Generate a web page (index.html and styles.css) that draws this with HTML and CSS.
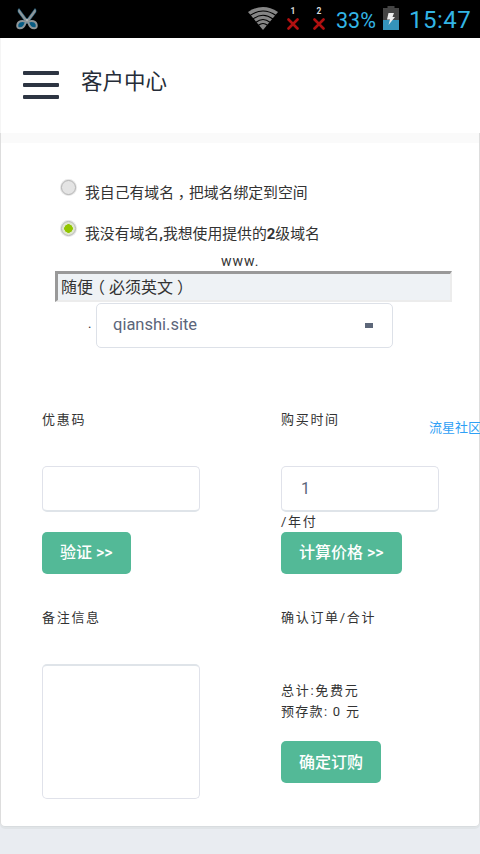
FILE: index.html
```html
<!DOCTYPE html>
<html lang="zh-CN">
<head>
  <meta charset="UTF-8">
  <meta name="viewport" content="width=device-width, initial-scale=1.0">
  <title>客户中心</title>
  <link rel="stylesheet" href="styles.css">
</head>
<body>

<div class="statusbar">
  <svg class="scissors" width="24" height="24" viewBox="0 0 24 24">
    <g fill="#8f9699" stroke="#176d96" stroke-width=".5">
      <path d="M4 1.5 L14 15 L11.5 16.5 L3 5 Q2.4 2.5 4 1.5Z"/>
      <path d="M20 1.5 L10 15 L12.5 16.5 L21 5 Q21.6 2.5 20 1.5Z"/>
    </g>
    <g fill="#075b83" stroke="#8f9699" stroke-width="2">
      <path d="M10.5 14.5 Q4 13 2.5 17 Q1.5 21 4.5 21.3 Q9 21.5 10.5 16Z"/>
      <path d="M13.5 14.5 Q20 13 21.5 17 Q22.5 21 19.5 21.3 Q15 21.5 13.5 16Z"/>
    </g>
    <circle cx="12" cy="13" r="1.2" fill="#aeb4b6"/>
  </svg>
  <span class="spacer"></span>
  <svg class="wifi" width="32" height="24" viewBox="0 0 32 24">
    <path d="M1 5 Q16 -5 31 5 L16 23Z" fill="#868686"/>
    <g fill="none" stroke="#000" stroke-width="1.1">
      <path d="M3 8.5 Q16 -.5 29 8.5"/>
      <path d="M6 12 Q16 4.5 26 12"/>
      <path d="M9 15.3 Q16 9.8 23 15.3"/>
      <path d="M11.5 18.3 Q16 14.8 20.5 18.3"/>
    </g>
  </svg>
  <div class="sim">
    <span>1</span>
    <svg width="12" height="12" viewBox="0 0 12 12"><path d="M1.5 1.5L10.5 10.5M10.5 1.5L1.5 10.5" stroke="#b01010" stroke-width="2.6" stroke-linecap="round"/></svg>
  </div>
  <div class="sim">
    <span>2</span>
    <svg width="12" height="12" viewBox="0 0 12 12"><path d="M1.5 1.5L10.5 10.5M10.5 1.5L1.5 10.5" stroke="#b01010" stroke-width="2.6" stroke-linecap="round"/></svg>
  </div>
  <span class="percent">33%</span>
  <svg class="battery" width="16" height="24" viewBox="0 0 16 24">
    <path d="M0 2H4.5V0H11.5V2H16V24H0Z" fill="#444"/>
    <path d="M0 14H16V24H0Z" fill="#3594bb"/>
    <path d="M5.5 7H11L9.5 11H12L5.5 19L7 13.5H4Z" fill="#eee"/>
  </svg>
  <span class="clock">15:47</span>
</div>

<div class="header">
  <div class="menu"><i></i><i></i><i></i></div>
  <h1>客户中心</h1>
</div>

<div class="panel">
  <div class="domain">
    <label class="choice"><span class="radio"></span><span>我自己有域名<span class="punct">，</span>把域名绑定到空间</span></label>
    <label class="choice"><span class="radio checked"></span><span>我没有域名<b>,</b>我想使用提供的<b>2</b>级域名</span></label>
    <div class="www">www.</div>
    <div class="prefix">随便<span class="punct">（</span>必须英文<span class="punct">）</span></div>
    <div class="suffix">
      <span class="dot">.</span>
      <div class="select">qianshi.site<i></i></div>
    </div>
  </div>

  <div class="watermark">流星社区</div>

  <div class="order">
    <div class="cell">
      <div class="label">优惠码</div>
      <div class="field"></div>
      <div class="unit"></div>
      <button class="btn">验证 &gt;&gt;</button>
    </div>
    <div class="cell">
      <div class="label">购买时间</div>
      <div class="field">1</div>
      <div class="unit">/年付</div>
      <button class="btn">计算价格 &gt;&gt;</button>
    </div>
    <div class="cell">
      <div class="label">备注信息</div>
      <div class="field memo"></div>
    </div>
    <div class="cell">
      <div class="label">确认订单/合计</div>
      <div class="total">总计:免费元<br><span class="deposit">预存款: 0 元</span></div>
      <button class="btn">确定订购</button>
    </div>
  </div>
</div>

</body>
</html>
```
FILE: styles.css
```css
* {
  box-sizing: border-box;
}

body {
  margin: 0;
  height: 854px;
  overflow: hidden;
  background: #e9ecf1;
  color: #333;
  font-family: Roboto, "Noto Sans CJK SC", sans-serif;
}

svg {
  display: block;
}

/* status bar */
.statusbar {
  display: flex;
  height: 38px;
  padding: 0 9px 0 15px;
  background: #000;
  color: #33b5e5;
}

.scissors {
  margin-top: 7px;
}

.spacer {
  flex: 1;
}

.wifi {
  margin: 7px 8px 0 0;
}

.sim {
  width: 12px;
  margin: 7px 14px 0 0;
}

.sim span {
  display: block;
  height: 11px;
  color: #ddd;
  font-size: 8.5px;
  font-weight: bold;
  line-height: 9px;
  text-align: center;
}

.percent {
  width: 40px;
  margin-left: -3px;
  font-size: 21.5px;
  line-height: 41px;
  white-space: nowrap;
}

.battery {
  margin: 6px 10px 0 7px;
}

.clock {
  width: 62px;
  font-size: 24px;
  line-height: 40px;
  letter-spacing: 0.5px;
  white-space: nowrap;
}

/* header */
.header {
  display: flex;
  height: 95px;
  padding-left: 23px;
  background: #fff;
  border-left: 1px solid #f5f5f5;
}

.menu {
  width: 36px;
  margin: 33px 22px 0 -1px;
}

.menu i {
  display: block;
  height: 4px;
  margin-bottom: 8px;
  border-radius: 1px;
  background: #2d3542;
}

h1 {
  margin: 0;
  color: #252c38;
  font-size: 21.5px;
  font-weight: normal;
  line-height: 88px;
}

/* panel */
.panel {
  position: relative;
  height: 694px;
  border: 1px solid #ddd;
  border-top: 0;
  border-bottom-color: #d8dcdf;
  border-radius: 0 0 5px 5px;
  background: linear-gradient(#fafafa 10px, #fff 10px);
  box-shadow: 0 2px 0 #e0e4e7;
}

.domain {
  height: 268px;
  padding: 39px 27px 0 54px;
}

.choice {
  display: flex;
  height: 41px;
  font-size: 14.85px;
  line-height: 42px;
}

.radio {
  width: 15px;
  height: 15px;
  margin: 8px 9px 0 6px;
  border: 1px solid #b5b5b5;
  border-radius: 50%;
  background: #e4e4e4;
  box-shadow: 0 0 0 1px #e6e6e6;
}

.checked {
  background: radial-gradient(circle, #92c500 0, #92c500 4px, #e0e7d0 4.5px);
}

/* half-width punctuation centred in a full cell */
.punct {
  display: inline-block;
  width: 1em;
  text-align: center;
  font-feature-settings: "halt";
}

.www {
  height: 17px;
  font-size: 14px;
  line-height: 15px;
  letter-spacing: 1px;
  padding-left: 166px;
}

.prefix {
  width: 397px;
  height: 31px;
  padding-left: 3px;
  border: solid #ececec;
  border-width: 3px 2px 2px 3px;
  border-top-color: #999;
  border-left-color: #999;
  background: #eef2f5;
  font-size: 16px;
  line-height: 27px;
}

.suffix {
  display: flex;
  margin-top: 1px;
}

.dot {
  width: 8px;
  margin-left: 33px;
  font-size: 13px;
  line-height: 41px;
}

.select {
  display: flex;
  align-items: center;
  justify-content: space-between;
  width: 297px;
  height: 45px;
  padding: 0 19px 3px 16px;
  border: 1px solid #dde1e8;
  border-radius: 5px;
  color: #5b657a;
  font-size: 16.5px;
}

.select i {
  width: 8px;
  height: 5px;
  margin-top: 3px;
  background: #5d6779;
}

.watermark {
  position: absolute;
  top: 286px;
  right: -2px;
  color: #2fa0f5;
  font-size: 13px;
  line-height: 18px;
}

/* order form */
.order {
  display: grid;
  grid-template-columns: 239px 158px;
  grid-template-rows: 198px 200px;
  padding-left: 41px;
}

.cell {
  font-size: 13px;
  letter-spacing: 1.7px;
}

.label {
  height: 65px;
  line-height: 38px;
}

.field {
  width: 158px;
  height: 46px;
  padding-left: 19px;
  border: 1px solid #e0e2ea;
  border-bottom: 2px solid #dfe4e9;
  border-radius: 5px;
  color: #5b657a;
  font-size: 16px;
  line-height: 43px;
}

.memo {
  height: 135px;
  border-top: 2px solid #dfe4e9;
  border-bottom: 1px solid #e0e2ea;
}

.unit {
  height: 20px;
  line-height: 19px;
}

.btn {
  display: block;
  height: 42px;
  padding: 0 18px;
  border: 0;
  border-radius: 5px;
  background: #53b997;
  color: #fff;
  font-family: inherit;
  font-size: 16px;
  font-weight: 500;
  line-height: 42px;
}

.total {
  height: 77px;
  padding-top: 16px;
  line-height: 21px;
}

.total + .btn {
  line-height: 43px;
}

.deposit {
  letter-spacing: 1.3px;
}
```
